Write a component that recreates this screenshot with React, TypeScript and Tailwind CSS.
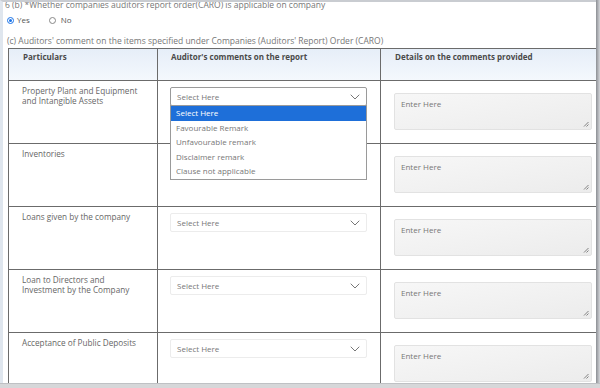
import React from "react";

const rows = [
  { label: ["Property Plant and Equipment", "and Intangible Assets"], open: true },
  { label: ["Inventories"], hideSelect: true },
  { label: ["Loans given by the company"] },
  { label: ["Loan to Directors and", "Investment by the Company"] },
  { label: ["Acceptance of Public Deposits"] },
];

const options = [
  "Select Here",
  "Favourable Remark",
  "Unfavourable remark",
  "Disclaimer remark",
  "Clause not applicable",
];

function Chevron() {
  return (
    <svg width="10" height="6" viewBox="0 0 10 6" fill="none">
      <path d="M1 1l4 4 4-4" stroke="#777" strokeWidth="1" strokeLinecap="round" strokeLinejoin="round" />
    </svg>
  );
}

function Grip() {
  return (
    <svg width="6" height="6" viewBox="0 0 6 6" className="absolute right-[2px] bottom-[2px]">
      <path d="M5.5 1L1 5.5M5.5 3.5L3.5 5.5" stroke="#666" strokeWidth="0.8" />
    </svg>
  );
}

export default function App() {
  return (
    <div
      className="w-[600px] h-[388px] overflow-hidden bg-[#d9dce0] flex flex-col"
      style={{ fontFamily: '"Open Sans", "Noto Sans", sans-serif' }}
    >
      <div className="flex-1 flex min-h-0">
        <div className="flex-1 bg-white border-l-[3px] border-l-[#dfe6ee] border-t-[2px] border-t-[#c9ccd1] flex flex-col min-h-0 overflow-hidden">
          <div className="text-[8.5px] leading-[10px] text-[#777] pl-[2px] -mt-[2px] whitespace-nowrap">
            6 (b) *Whether companies auditors report order(CARO) is applicable on company
          </div>
          <div className="flex items-center gap-[3px] pl-[4px] mt-[5px] h-[10px] text-[8px] text-[#555]">
            <span className="w-[7px] h-[7px] rounded-full border border-[#1a73e8] flex items-center justify-center">
              <span className="w-[3px] h-[3px] rounded-full bg-[#1a73e8]" />
            </span>
            <span>Yes</span>
            <span className="ml-[16px] w-[7px] h-[7px] rounded-full border border-[#888]" />
            <span className="ml-[2px]">No</span>
          </div>
          <div className="text-[8.5px] leading-[10px] text-[#777] pl-[4px] mt-[11px] whitespace-nowrap">
            (c) Auditors' comment on the items specified under Companies (Auditors' Report) Order (CARO)
          </div>
          <div className="ml-[5px] mt-[2px] border-l border-t border-[#6b6b6b] flex flex-col">
            <div className="grid grid-cols-[149px_223px_1fr] h-[32px] bg-gradient-to-b from-[#e6eef8] to-[#f4f8fd] border-b border-[#6b6b6b] text-[8px] font-bold text-[#4a4a4a]">
              <div className="pl-[14px] pt-[2px] border-r border-[#6b6b6b]">Particulars</div>
              <div className="pl-[13px] pt-[2px] border-r border-[#6b6b6b]">Auditor's comments on the report</div>
              <div className="pl-[14px] pt-[2px]">Details on the comments provided</div>
            </div>
            {rows.map((r, i) => (
              <div
                key={i}
                className="grid grid-cols-[149px_223px_1fr] h-[63px] shrink-0 border-b border-[#6b6b6b] text-[8px] text-[#666]"
              >
                <div className="pl-[13px] pt-[5px] leading-[10px] border-r border-[#6b6b6b] text-[8.2px]">
                  {r.label.map((l, j) => (
                    <div key={j}>{l}</div>
                  ))}
                </div>
                <div className="relative pl-[12px] pr-[13px] pt-[6px] border-r border-[#6b6b6b]">
                  {!r.hideSelect && (
                    <div
                      className={
                        "h-[19px] flex items-center justify-between px-[6px] rounded-[2px] bg-white text-[#777] border " +
                        (r.open ? "border-[#9a9a9a]" : "border-[#ececec]")
                      }
                    >
                      <span>Select Here</span>
                      <Chevron />
                    </div>
                  )}
                  {r.open && (
                    <div className="absolute left-[12px] right-[13px] top-[24px] z-10 bg-white border border-[#9a9a9a] text-[8px] text-[#777]">
                      {options.map((o, k) => (
                        <div
                          key={o}
                          className={
                            "h-[14.5px] flex items-center px-[5px] " +
                            (k === 0 ? "bg-[#1e6fd9] text-white" : "")
                          }
                        >
                          {o}
                        </div>
                      ))}
                    </div>
                  )}
                </div>
                <div className="pl-[13px] pr-[4px] pt-[12px]">
                  <div className="relative h-[37px] rounded-[2px] border border-[#e2e2e2] bg-gradient-to-br from-[#f7f7f7] to-[#ececec] px-[6px] pt-[4px] text-[#777]">
                    Enter Here
                    <Grip />
                  </div>
                </div>
              </div>
            ))}
          </div>
        </div>
        <div className="w-[4px] bg-gradient-to-r from-[#8c8f94] to-[#d4d6da]" />
      </div>
      <div className="h-[5px] bg-[#d6d7d9] border-t border-[#bfc1c4]" />
    </div>
  );
}
